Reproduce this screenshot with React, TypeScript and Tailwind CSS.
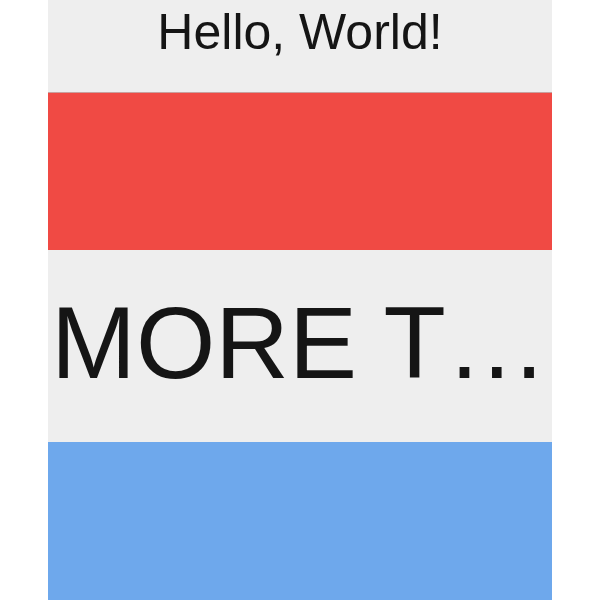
export default function App() {
  return (
    <div className="flex min-h-[600px] justify-center bg-white font-['Liberation_Sans',Arial,sans-serif] text-[#151515]">
      <div className="flex w-[504px] flex-col">
        <div className="h-[92px] bg-[#eeeeee] pt-[3px] text-center text-[50px] leading-[58px]">
          Hello, World!
        </div>
        <div className="h-[158px] border-t border-[#c9a09e] bg-[#f04a44]" />
        <div className="flex h-[192px] items-center bg-[#eeeeee] pb-[6px] pl-[3px]">
          <p className="truncate text-[102px] leading-[116px]">MORE TEXT THAN FITS</p>
        </div>
        <div className="h-[158px] bg-[#6ea8ec]" />
      </div>
    </div>
  );
}
